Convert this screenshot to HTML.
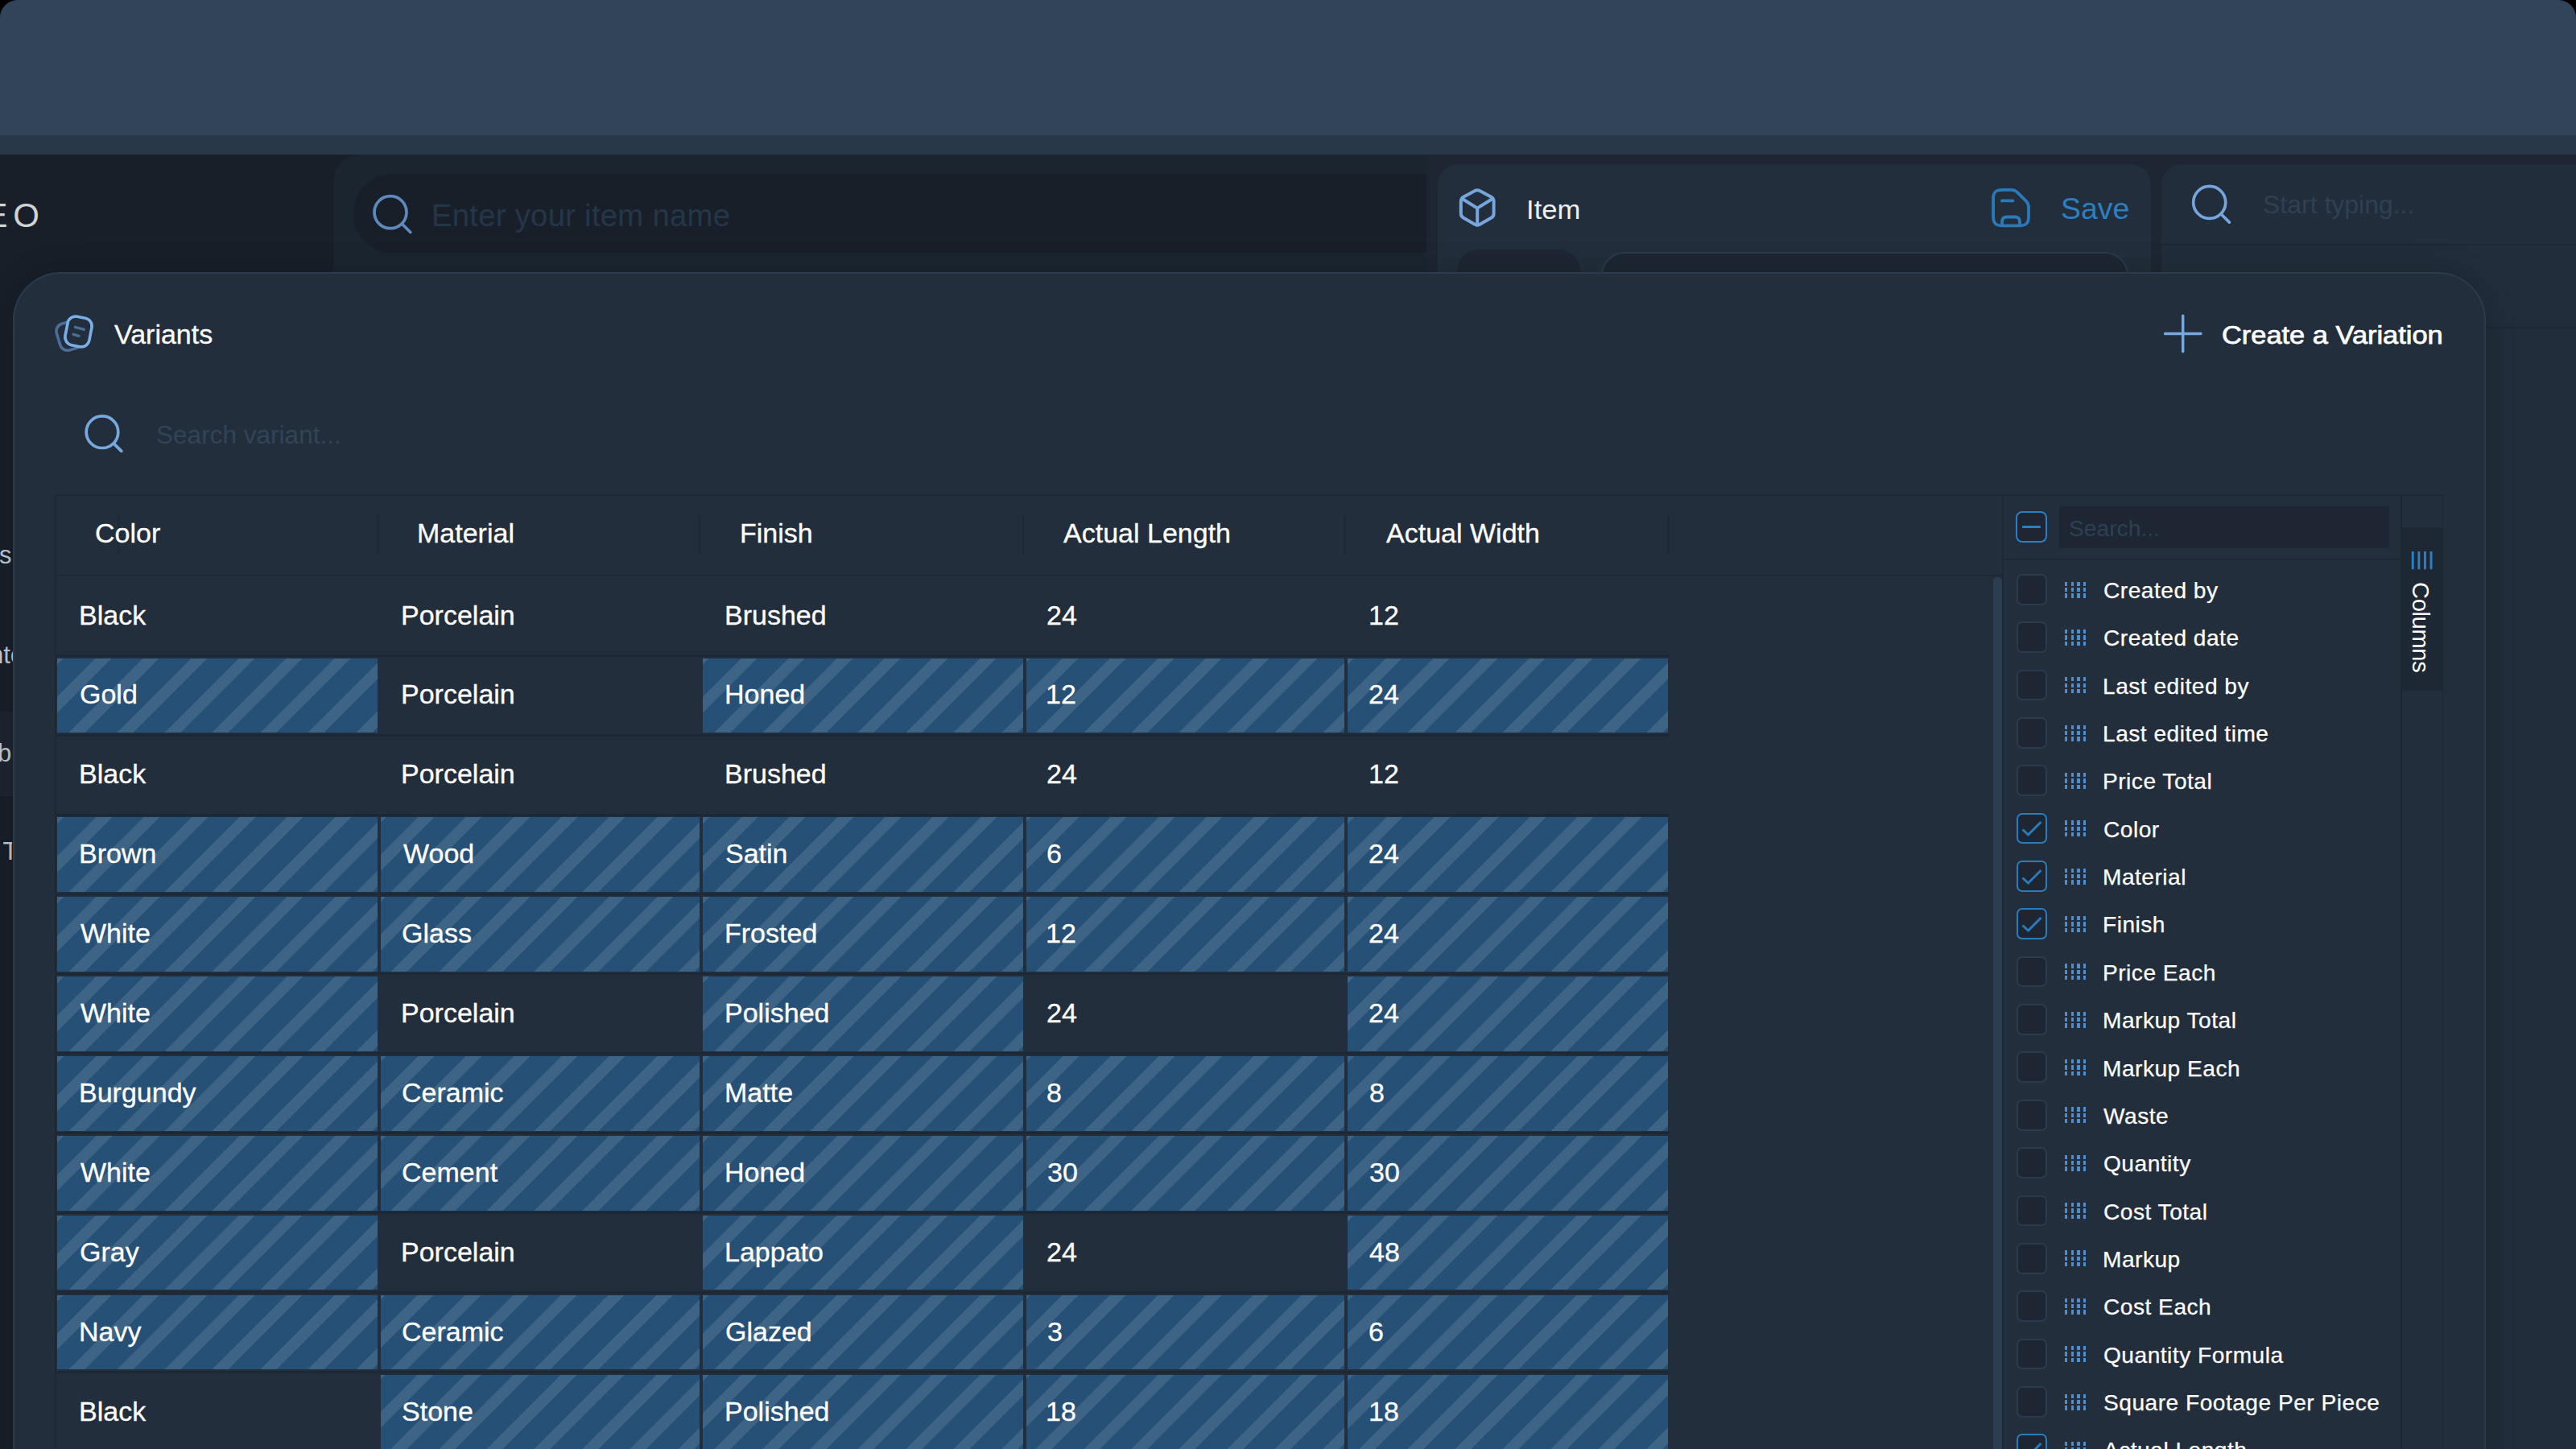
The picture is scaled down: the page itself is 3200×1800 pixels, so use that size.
<!DOCTYPE html><html><head><meta charset="utf-8"><title>Variants</title>
<style>
*{box-sizing:border-box;margin:0;padding:0}
html,body{width:3200px;height:1800px;background:#000;overflow:hidden}
body{font-family:"Liberation Sans",sans-serif;position:relative}
#scr{position:absolute;left:0;top:0;width:3200px;height:1800px;background:#181f29;border-radius:22px 22px 0 0;overflow:hidden}
.a{position:absolute}
.t{position:absolute;line-height:1;white-space:nowrap;transform-origin:0 50%}
svg{position:absolute;overflow:visible}
.hl{background:repeating-linear-gradient(-45deg,#265075 0,#265075 4.9px,#3d6385 4.9px,#3d6385 19px,#265075 19px,#265075 42px)}
.cell{position:absolute;height:92.7px}
.cb{position:absolute;width:38.6px;height:38.8px;border:2px solid #2b3a4c;border-radius:7px;background:#1d2632}
.cb.on{border:2.5px solid #2a7cbd}
.dots{position:absolute;width:27px;height:20px}
</style></head><body><div id="scr">
<div class="a" style="left:0;top:0;width:3200px;height:168px;background:#324459"></div>
<div class="a" style="left:0;top:168px;width:3200px;height:24px;background:#283848"></div>
<div class="a" style="left:0;top:192px;width:414px;height:1608px;background:#181f29"></div>
<div class="a" style="left:0;top:884px;width:414px;height:105px;background:#1d2531"></div>
<div class="t " style="left:-18.6px;top:247.0px;font-size:42px;color:#d2d2d2;">E</div>
<div class="t " style="left:16.2px;top:247.0px;font-size:42px;color:#d2d2d2;">O</div>
<div class="t " style="left:-1.0px;top:674.1px;font-size:31px;color:#c3cad3;">s</div>
<div class="t " style="left:-13.0px;top:797.8px;font-size:31px;color:#c3cad3;">nte</div>
<div class="t " style="left:-3.0px;top:920.1px;font-size:31px;color:#c3cad3;">b</div>
<div class="t " style="left:3.5px;top:1042.4px;font-size:31px;color:#c3cad3;width:11.5px;overflow:hidden">T</div>
<div class="a" style="left:414px;top:192px;width:1358px;height:1608px;background:#1b2530;border-top-left-radius:34px"></div>
<div class="a" style="left:438.5px;top:215.6px;width:1333.5px;height:98.7px;background:#181f29;border-radius:50px 0 0 50px"></div>
<svg style="left:0;top:0" width="3200" height="400"><g fill="none" stroke="#5d8abd" stroke-width="3.7" stroke-linecap="round"><circle cx="485" cy="263.7" r="20"/><path d="M499.3 278 L509.8 288.5"/></g></svg>
<div class="t " style="left:536.4px;top:248.6px;font-size:38px;color:#263649;transform:scaleX(1.008);letter-spacing:0.25px">Enter your item name</div>
<div class="a" style="left:1772px;top:192px;width:1428px;height:1608px;background:#1d2632"></div>
<div class="a" style="left:1786px;top:204px;width:886px;height:200px;background:#232e3c;border-radius:26px 26px 0 0"></div>
<div class="a" style="left:1810px;top:310px;width:153px;height:80px;background:#1d2632;border-radius:27px"></div>
<div class="a" style="left:1989px;top:313px;width:655px;height:80px;background:#1d2632;border:2px solid #2b3a4c;border-radius:29px"></div>
<svg style="left:0;top:0" width="3200" height="400"><g fill="none" stroke="#76a6db" stroke-width="4" stroke-linejoin="round" stroke-linecap="round">
<path d="M1831.7 237.2 Q1835.2 235.2 1838.7 237.2 L1852.6 244.7 Q1855.6 246.4 1855.6 250.2 L1855.6 265.2 Q1855.6 268.9 1852.6 270.6 L1838.7 278.5 Q1835.2 280.5 1831.7 278.5 L1817.8 270.6 Q1814.8 268.9 1814.8 265.2 L1814.8 250.2 Q1814.8 246.4 1817.8 244.7 Z"/>
<path d="M1816.2 246.8 L1835.2 258.6 L1854.2 246.8 M1835.2 258.6 L1835.2 279.8"/></g></svg>
<div class="t " style="left:1895.7px;top:243.7px;font-size:33px;color:#eef0f2;transform:scaleX(1.05);">Item</div>
<svg style="left:0;top:0" width="3200" height="400"><g fill="none" stroke="#2b7ab8" stroke-width="3.8" stroke-linejoin="round" stroke-linecap="round">
<path d="M2476.1 246.5 C2476.1 238.8 2479 235.8 2487 235.8 L2498.8 235.8 Q2502.6 235.8 2505.4 238.4 L2516.8 249.6 Q2520 252.8 2520 257.2 L2520 269 C2520 277.2 2517 280.3 2508.5 280.3 L2487.6 280.3 C2479 280.3 2476.1 277.2 2476.1 269 Z"/>
<path d="M2487 279.8 L2487 275.6 Q2487 269.5 2493.2 269.5 L2502.8 269.5 Q2509 269.5 2509 275.6 L2509 279.8"/>
<path d="M2487 249.4 L2500.4 249.4"/></g></svg>
<div class="t " style="left:2560.1px;top:242.0px;font-size:36px;color:#2e7fc0;transform:scaleX(1.04);">Save</div>
<div class="a" style="left:2685px;top:204px;width:515px;height:1596px;background:#222d3b;border-top-left-radius:26px"></div>
<div class="a" style="left:2685px;top:302.5px;width:515px;height:2px;background:#1d2632"></div>
<div class="a" style="left:3088px;top:405.6px;width:112px;height:2px;background:#1e2835"></div>
<svg style="left:0;top:0" width="3200" height="400"><g fill="none" stroke="#76a6db" stroke-width="3.7" stroke-linecap="round"><circle cx="2744.7" cy="251.4" r="20"/><path d="M2759 265.7 L2769.4 276.1"/></g></svg>
<div class="t " style="left:2810.5px;top:238.7px;font-size:31.5px;color:#2f4054;transform:scaleX(1.015);">Start typing...</div>
<div class="a" style="left:15.5px;top:337.5px;width:3072px;height:1600px;background:#232e3c;border:2px solid #2b3a4d;border-radius:60px;box-shadow:0 0 36px 0 rgba(10,14,20,0.22)"></div>
<svg style="left:0;top:0" width="400" height="500"><g fill="none" stroke-width="3.6" stroke-linecap="round" stroke-linejoin="round">
<g transform="translate(85.6,417.4) rotate(-17)"><rect x="-13.6" y="-17" width="27.2" height="34" rx="9.5" stroke="#4b6e96"/></g>
<g transform="translate(97.5,412) rotate(11)"><rect x="-15.2" y="-18" width="30.4" height="36" rx="10" stroke="#7aaee6" fill="#232e3c"/></g>
<path d="M93.4 406.3 L104.4 409.4 M91 415.3 L98 417.4" stroke="#4b6e96" stroke-width="3.3"/></g></svg>
<div class="t " style="left:141.5px;top:399.7px;font-size:32.4px;color:#fff;transform:scaleX(1.05);-webkit-text-stroke:0.3px #fff">Variants</div>
<svg style="left:0;top:0" width="3200" height="500"><path d="M2689.5 414.5 H2734 M2711.7 392.3 V436.8" stroke="#7aa8dd" stroke-width="3.4" stroke-linecap="round" fill="none"/></svg>
<div class="t " style="left:2760.4px;top:399.8px;font-size:32px;color:#fff;transform:scaleX(1.075);-webkit-text-stroke:0.75px #fff">Create a Variation</div>
<svg style="left:0;top:0" width="400" height="700"><g fill="none" stroke="#78a9de" stroke-width="3.7" stroke-linecap="round"><circle cx="127" cy="536.7" r="19.8"/><path d="M141.2 550.9 L150.8 560.4"/></g></svg>
<div class="t " style="left:193.5px;top:524.5px;font-size:31px;color:#324457;transform:scaleX(1.018);">Search variant...</div>
<div class="a" style="left:67.5px;top:613.5px;width:2967px;height:2px;background:#1e2835"></div>
<div class="a" style="left:67.5px;top:613.5px;width:2px;height:1200px;background:#1e2835"></div>
<div class="a" style="left:67.5px;top:714.4px;width:2420px;height:2px;background:#1e2835"></div>
<div class="a" style="left:468.2px;top:638.5px;width:2.6px;height:50.3px;background:#1f2936"></div>
<div class="a" style="left:867.9px;top:638.5px;width:2.6px;height:50.3px;background:#1f2936"></div>
<div class="a" style="left:1269.6px;top:638.5px;width:2.6px;height:50.3px;background:#1f2936"></div>
<div class="a" style="left:1669.4px;top:638.5px;width:2.6px;height:50.3px;background:#1f2936"></div>
<div class="a" style="left:2071.3px;top:638.5px;width:2.6px;height:50.3px;background:#1f2936"></div>
<div class="a" style="left:146.4px;top:638.5px;width:2px;height:50px;background:#1f2936"></div>
<div class="t " style="left:117.8px;top:646.8px;font-size:32.4px;color:#fff;transform:scaleX(1.05);-webkit-text-stroke:0.3px #fff">Color</div>
<div class="t " style="left:517.6px;top:646.8px;font-size:32.4px;color:#fff;transform:scaleX(1.05);-webkit-text-stroke:0.3px #fff">Material</div>
<div class="t " style="left:919.4px;top:646.8px;font-size:32.4px;color:#fff;transform:scaleX(1.05);-webkit-text-stroke:0.3px #fff">Finish</div>
<div class="t " style="left:1321.4px;top:646.8px;font-size:32.4px;color:#fff;transform:scaleX(1.05);-webkit-text-stroke:0.3px #fff">Actual Length</div>
<div class="t " style="left:1721.9px;top:646.8px;font-size:32.4px;color:#fff;transform:scaleX(1.05);-webkit-text-stroke:0.3px #fff">Actual Width</div>
<div class="a" style="left:69.5px;top:812.9px;width:2004.6px;height:2.9px;background:#1e2835"></div>
<div class="t " style="left:97.7px;top:748.5px;font-size:32.4px;color:#fff;transform:scaleX(1.05);-webkit-text-stroke:0.3px #fff">Black</div>
<div class="t " style="left:497.9px;top:748.5px;font-size:32.4px;color:#fff;transform:scaleX(1.05);-webkit-text-stroke:0.3px #fff">Porcelain</div>
<div class="t " style="left:899.6px;top:748.5px;font-size:32.4px;color:#fff;transform:scaleX(1.05);-webkit-text-stroke:0.3px #fff">Brushed</div>
<div class="t " style="left:1300.1px;top:748.5px;font-size:32.4px;color:#fff;transform:scaleX(1.05);-webkit-text-stroke:0.3px #fff">24</div>
<div class="t " style="left:1699.5px;top:748.5px;font-size:32.4px;color:#fff;transform:scaleX(1.05);-webkit-text-stroke:0.3px #fff">12</div>
<div class="a" style="left:69.5px;top:911.8px;width:2004.6px;height:2.9px;background:#1e2835"></div>
<div class="cell hl" style="left:71.4px;top:817.5px;width:397.9px"></div>
<div class="t " style="left:98.8px;top:847.4px;font-size:32.4px;color:#fff;transform:scaleX(1.05);-webkit-text-stroke:0.3px #fff">Gold</div>
<div class="t " style="left:497.9px;top:847.4px;font-size:32.4px;color:#fff;transform:scaleX(1.05);-webkit-text-stroke:0.3px #fff">Porcelain</div>
<div class="cell hl" style="left:872.9px;top:817.5px;width:397.8px"></div>
<div class="t " style="left:899.6px;top:847.4px;font-size:32.4px;color:#fff;transform:scaleX(1.05);-webkit-text-stroke:0.3px #fff">Honed</div>
<div class="cell hl" style="left:1274.5px;top:817.5px;width:395.9px"></div>
<div class="t " style="left:1299.2px;top:847.4px;font-size:32.4px;color:#fff;transform:scaleX(1.05);-webkit-text-stroke:0.3px #fff">12</div>
<div class="cell hl" style="left:1674.4px;top:817.5px;width:398.0px"></div>
<div class="t " style="left:1700.4px;top:847.4px;font-size:32.4px;color:#fff;transform:scaleX(1.05);-webkit-text-stroke:0.3px #fff">24</div>
<div class="a" style="left:69.5px;top:1010.7px;width:2004.6px;height:2.9px;background:#1e2835"></div>
<div class="t " style="left:97.7px;top:946.3px;font-size:32.4px;color:#fff;transform:scaleX(1.05);-webkit-text-stroke:0.3px #fff">Black</div>
<div class="t " style="left:497.9px;top:946.3px;font-size:32.4px;color:#fff;transform:scaleX(1.05);-webkit-text-stroke:0.3px #fff">Porcelain</div>
<div class="t " style="left:899.6px;top:946.3px;font-size:32.4px;color:#fff;transform:scaleX(1.05);-webkit-text-stroke:0.3px #fff">Brushed</div>
<div class="t " style="left:1300.1px;top:946.3px;font-size:32.4px;color:#fff;transform:scaleX(1.05);-webkit-text-stroke:0.3px #fff">24</div>
<div class="t " style="left:1699.5px;top:946.3px;font-size:32.4px;color:#fff;transform:scaleX(1.05);-webkit-text-stroke:0.3px #fff">12</div>
<div class="a" style="left:69.5px;top:1109.6px;width:2004.6px;height:2.9px;background:#1e2835"></div>
<div class="cell hl" style="left:71.4px;top:1015.3px;width:397.9px"></div>
<div class="t " style="left:97.7px;top:1045.2px;font-size:32.4px;color:#fff;transform:scaleX(1.05);-webkit-text-stroke:0.3px #fff">Brown</div>
<div class="cell hl" style="left:473.1px;top:1015.3px;width:395.8px"></div>
<div class="t " style="left:500.6px;top:1045.2px;font-size:32.4px;color:#fff;transform:scaleX(1.05);-webkit-text-stroke:0.3px #fff">Wood</div>
<div class="cell hl" style="left:872.9px;top:1015.3px;width:397.8px"></div>
<div class="t " style="left:900.9px;top:1045.2px;font-size:32.4px;color:#fff;transform:scaleX(1.05);-webkit-text-stroke:0.3px #fff">Satin</div>
<div class="cell hl" style="left:1274.5px;top:1015.3px;width:395.9px"></div>
<div class="t " style="left:1300.1px;top:1045.2px;font-size:32.4px;color:#fff;transform:scaleX(1.05);-webkit-text-stroke:0.3px #fff">6</div>
<div class="cell hl" style="left:1674.4px;top:1015.3px;width:398.0px"></div>
<div class="t " style="left:1700.4px;top:1045.2px;font-size:32.4px;color:#fff;transform:scaleX(1.05);-webkit-text-stroke:0.3px #fff">24</div>
<div class="a" style="left:69.5px;top:1208.5px;width:2004.6px;height:2.9px;background:#1e2835"></div>
<div class="cell hl" style="left:71.4px;top:1114.2px;width:397.9px"></div>
<div class="t " style="left:100.4px;top:1144.1px;font-size:32.4px;color:#fff;transform:scaleX(1.05);-webkit-text-stroke:0.3px #fff">White</div>
<div class="cell hl" style="left:473.1px;top:1114.2px;width:395.8px"></div>
<div class="t " style="left:499.0px;top:1144.1px;font-size:32.4px;color:#fff;transform:scaleX(1.05);-webkit-text-stroke:0.3px #fff">Glass</div>
<div class="cell hl" style="left:872.9px;top:1114.2px;width:397.8px"></div>
<div class="t " style="left:899.6px;top:1144.1px;font-size:32.4px;color:#fff;transform:scaleX(1.05);-webkit-text-stroke:0.3px #fff">Frosted</div>
<div class="cell hl" style="left:1274.5px;top:1114.2px;width:395.9px"></div>
<div class="t " style="left:1299.2px;top:1144.1px;font-size:32.4px;color:#fff;transform:scaleX(1.05);-webkit-text-stroke:0.3px #fff">12</div>
<div class="cell hl" style="left:1674.4px;top:1114.2px;width:398.0px"></div>
<div class="t " style="left:1700.4px;top:1144.1px;font-size:32.4px;color:#fff;transform:scaleX(1.05);-webkit-text-stroke:0.3px #fff">24</div>
<div class="a" style="left:69.5px;top:1307.4px;width:2004.6px;height:2.9px;background:#1e2835"></div>
<div class="cell hl" style="left:71.4px;top:1213.1px;width:397.9px"></div>
<div class="t " style="left:100.4px;top:1243.0px;font-size:32.4px;color:#fff;transform:scaleX(1.05);-webkit-text-stroke:0.3px #fff">White</div>
<div class="t " style="left:497.9px;top:1243.0px;font-size:32.4px;color:#fff;transform:scaleX(1.05);-webkit-text-stroke:0.3px #fff">Porcelain</div>
<div class="cell hl" style="left:872.9px;top:1213.1px;width:397.8px"></div>
<div class="t " style="left:899.6px;top:1243.0px;font-size:32.4px;color:#fff;transform:scaleX(1.05);-webkit-text-stroke:0.3px #fff">Polished</div>
<div class="t " style="left:1300.1px;top:1243.0px;font-size:32.4px;color:#fff;transform:scaleX(1.05);-webkit-text-stroke:0.3px #fff">24</div>
<div class="cell hl" style="left:1674.4px;top:1213.1px;width:398.0px"></div>
<div class="t " style="left:1700.4px;top:1243.0px;font-size:32.4px;color:#fff;transform:scaleX(1.05);-webkit-text-stroke:0.3px #fff">24</div>
<div class="a" style="left:69.5px;top:1406.3px;width:2004.6px;height:2.9px;background:#1e2835"></div>
<div class="cell hl" style="left:71.4px;top:1312.0px;width:397.9px"></div>
<div class="t " style="left:97.7px;top:1341.9px;font-size:32.4px;color:#fff;transform:scaleX(1.05);-webkit-text-stroke:0.3px #fff">Burgundy</div>
<div class="cell hl" style="left:473.1px;top:1312.0px;width:395.8px"></div>
<div class="t " style="left:499.0px;top:1341.9px;font-size:32.4px;color:#fff;transform:scaleX(1.05);-webkit-text-stroke:0.3px #fff">Ceramic</div>
<div class="cell hl" style="left:872.9px;top:1312.0px;width:397.8px"></div>
<div class="t " style="left:899.6px;top:1341.9px;font-size:32.4px;color:#fff;transform:scaleX(1.05);-webkit-text-stroke:0.3px #fff">Matte</div>
<div class="cell hl" style="left:1274.5px;top:1312.0px;width:395.9px"></div>
<div class="t " style="left:1300.3px;top:1341.9px;font-size:32.4px;color:#fff;transform:scaleX(1.05);-webkit-text-stroke:0.3px #fff">8</div>
<div class="cell hl" style="left:1674.4px;top:1312.0px;width:398.0px"></div>
<div class="t " style="left:1700.6px;top:1341.9px;font-size:32.4px;color:#fff;transform:scaleX(1.05);-webkit-text-stroke:0.3px #fff">8</div>
<div class="a" style="left:69.5px;top:1505.2px;width:2004.6px;height:2.9px;background:#1e2835"></div>
<div class="cell hl" style="left:71.4px;top:1410.9px;width:397.9px"></div>
<div class="t " style="left:100.4px;top:1440.8px;font-size:32.4px;color:#fff;transform:scaleX(1.05);-webkit-text-stroke:0.3px #fff">White</div>
<div class="cell hl" style="left:473.1px;top:1410.9px;width:395.8px"></div>
<div class="t " style="left:499.0px;top:1440.8px;font-size:32.4px;color:#fff;transform:scaleX(1.05);-webkit-text-stroke:0.3px #fff">Cement</div>
<div class="cell hl" style="left:872.9px;top:1410.9px;width:397.8px"></div>
<div class="t " style="left:899.6px;top:1440.8px;font-size:32.4px;color:#fff;transform:scaleX(1.05);-webkit-text-stroke:0.3px #fff">Honed</div>
<div class="cell hl" style="left:1274.5px;top:1410.9px;width:395.9px"></div>
<div class="t " style="left:1300.5px;top:1440.8px;font-size:32.4px;color:#fff;transform:scaleX(1.05);-webkit-text-stroke:0.3px #fff">30</div>
<div class="cell hl" style="left:1674.4px;top:1410.9px;width:398.0px"></div>
<div class="t " style="left:1700.8px;top:1440.8px;font-size:32.4px;color:#fff;transform:scaleX(1.05);-webkit-text-stroke:0.3px #fff">30</div>
<div class="a" style="left:69.5px;top:1604.1px;width:2004.6px;height:2.9px;background:#1e2835"></div>
<div class="cell hl" style="left:71.4px;top:1509.8px;width:397.9px"></div>
<div class="t " style="left:98.8px;top:1539.7px;font-size:32.4px;color:#fff;transform:scaleX(1.05);-webkit-text-stroke:0.3px #fff">Gray</div>
<div class="t " style="left:497.9px;top:1539.7px;font-size:32.4px;color:#fff;transform:scaleX(1.05);-webkit-text-stroke:0.3px #fff">Porcelain</div>
<div class="cell hl" style="left:872.9px;top:1509.8px;width:397.8px"></div>
<div class="t " style="left:899.6px;top:1539.7px;font-size:32.4px;color:#fff;transform:scaleX(1.05);-webkit-text-stroke:0.3px #fff">Lappato</div>
<div class="t " style="left:1300.1px;top:1539.7px;font-size:32.4px;color:#fff;transform:scaleX(1.05);-webkit-text-stroke:0.3px #fff">24</div>
<div class="cell hl" style="left:1674.4px;top:1509.8px;width:398.0px"></div>
<div class="t " style="left:1701.3px;top:1539.7px;font-size:32.4px;color:#fff;transform:scaleX(1.05);-webkit-text-stroke:0.3px #fff">48</div>
<div class="a" style="left:69.5px;top:1703.0px;width:2004.6px;height:2.9px;background:#1e2835"></div>
<div class="cell hl" style="left:71.4px;top:1608.7px;width:397.9px"></div>
<div class="t " style="left:97.7px;top:1638.6px;font-size:32.4px;color:#fff;transform:scaleX(1.05);-webkit-text-stroke:0.3px #fff">Navy</div>
<div class="cell hl" style="left:473.1px;top:1608.7px;width:395.8px"></div>
<div class="t " style="left:499.0px;top:1638.6px;font-size:32.4px;color:#fff;transform:scaleX(1.05);-webkit-text-stroke:0.3px #fff">Ceramic</div>
<div class="cell hl" style="left:872.9px;top:1608.7px;width:397.8px"></div>
<div class="t " style="left:900.7px;top:1638.6px;font-size:32.4px;color:#fff;transform:scaleX(1.05);-webkit-text-stroke:0.3px #fff">Glazed</div>
<div class="cell hl" style="left:1274.5px;top:1608.7px;width:395.9px"></div>
<div class="t " style="left:1300.5px;top:1638.6px;font-size:32.4px;color:#fff;transform:scaleX(1.05);-webkit-text-stroke:0.3px #fff">3</div>
<div class="cell hl" style="left:1674.4px;top:1608.7px;width:398.0px"></div>
<div class="t " style="left:1700.4px;top:1638.6px;font-size:32.4px;color:#fff;transform:scaleX(1.05);-webkit-text-stroke:0.3px #fff">6</div>
<div class="a" style="left:69.5px;top:1801.9px;width:2004.6px;height:2.9px;background:#1e2835"></div>
<div class="t " style="left:97.7px;top:1737.5px;font-size:32.4px;color:#fff;transform:scaleX(1.05);-webkit-text-stroke:0.3px #fff">Black</div>
<div class="cell hl" style="left:473.1px;top:1707.6px;width:395.8px"></div>
<div class="t " style="left:499.2px;top:1737.5px;font-size:32.4px;color:#fff;transform:scaleX(1.05);-webkit-text-stroke:0.3px #fff">Stone</div>
<div class="cell hl" style="left:872.9px;top:1707.6px;width:397.8px"></div>
<div class="t " style="left:899.6px;top:1737.5px;font-size:32.4px;color:#fff;transform:scaleX(1.05);-webkit-text-stroke:0.3px #fff">Polished</div>
<div class="cell hl" style="left:1274.5px;top:1707.6px;width:395.9px"></div>
<div class="t " style="left:1299.2px;top:1737.5px;font-size:32.4px;color:#fff;transform:scaleX(1.05);-webkit-text-stroke:0.3px #fff">18</div>
<div class="cell hl" style="left:1674.4px;top:1707.6px;width:398.0px"></div>
<div class="t " style="left:1699.5px;top:1737.5px;font-size:32.4px;color:#fff;transform:scaleX(1.05);-webkit-text-stroke:0.3px #fff">18</div>
<div class="a" style="left:2475.5px;top:717px;width:11.3px;height:1200px;background:#2c3e52;border-radius:6px"></div>
<div class="a" style="left:2487px;top:615px;width:2px;height:1200px;background:#1e2835"></div>
<div class="a" style="left:2981.5px;top:615px;width:2px;height:1200px;background:#1e2835"></div>
<div class="a" style="left:3033.5px;top:615px;width:1.5px;height:1200px;background:#1f2936"></div>
<div class="a" style="left:2489px;top:694px;width:493px;height:2px;background:#1e2835"></div>
<div class="a" style="left:2983.5px;top:655px;width:50px;height:203px;background:#1e2734"></div>
<svg style="left:0;top:0" width="3200" height="800"><g fill="#2e7fc4"><rect x="2995.8" y="685" width="2.9" height="22.2"/><rect x="3003.4" y="685" width="2.9" height="22.2"/><rect x="3011" y="685" width="2.9" height="22.2"/><rect x="3018.6" y="685" width="2.9" height="22.2"/></g></svg>
<div class="t" style="left:2992px;top:722.5px;font-size:29px;color:#fff;writing-mode:vertical-rl;letter-spacing:-0.3px;line-height:30px;width:30px">Columns</div>
<div class="a" style="left:2503.7px;top:634.9px;width:39.5px;height:39.5px;border:2.6px solid #2a7fc2;border-radius:8px;background:#1d2632"></div>
<div class="a" style="left:2512px;top:652.6px;width:23.4px;height:3.4px;background:#2a7fc2;border-radius:1px"></div>
<div class="a" style="left:2558px;top:629px;width:410px;height:51.6px;background:#1d2632"></div>
<div class="t " style="left:2570.3px;top:643.8px;font-size:27px;color:#2f4054;transform:scaleX(1.045);">Search...</div>
<div class="cb" style="left:2504.8px;top:712.9px"></div>
<div class="dots" style="left:2565px;top:722.5px;background:repeating-linear-gradient(0deg,transparent 0,transparent 2.2px,#232e3c 2.2px,#232e3c 0),repeating-linear-gradient(90deg,#4f8dcd 0,#4f8dcd 3.4px,transparent 3.5px,transparent 7.65px)"></div>
<div class="a" style="left:2564px;top:727.7px;width:29px;height:2.2px;background:#232e3c"></div>
<div class="a" style="left:2564px;top:735.1px;width:29px;height:2.2px;background:#232e3c"></div>
<div class="t " style="left:2612.5px;top:720.0px;font-size:28px;color:#fff;transform:scaleX(1.004);letter-spacing:0.5px;-webkit-text-stroke:0.25px #fff">Created by</div>
<div class="cb" style="left:2504.8px;top:772.2px"></div>
<div class="dots" style="left:2565px;top:781.9px;background:repeating-linear-gradient(0deg,transparent 0,transparent 2.2px,#232e3c 2.2px,#232e3c 0),repeating-linear-gradient(90deg,#4f8dcd 0,#4f8dcd 3.4px,transparent 3.5px,transparent 7.65px)"></div>
<div class="a" style="left:2564px;top:787.1px;width:29px;height:2.2px;background:#232e3c"></div>
<div class="a" style="left:2564px;top:794.5px;width:29px;height:2.2px;background:#232e3c"></div>
<div class="t " style="left:2612.5px;top:779.3px;font-size:28px;color:#fff;transform:scaleX(1.004);letter-spacing:0.5px;-webkit-text-stroke:0.25px #fff">Created date</div>
<div class="cb" style="left:2504.8px;top:831.6px"></div>
<div class="dots" style="left:2565px;top:841.2px;background:repeating-linear-gradient(0deg,transparent 0,transparent 2.2px,#232e3c 2.2px,#232e3c 0),repeating-linear-gradient(90deg,#4f8dcd 0,#4f8dcd 3.4px,transparent 3.5px,transparent 7.65px)"></div>
<div class="a" style="left:2564px;top:846.4px;width:29px;height:2.2px;background:#232e3c"></div>
<div class="a" style="left:2564px;top:853.8px;width:29px;height:2.2px;background:#232e3c"></div>
<div class="t " style="left:2611.6px;top:838.7px;font-size:28px;color:#fff;transform:scaleX(1.004);letter-spacing:0.5px;-webkit-text-stroke:0.25px #fff">Last edited by</div>
<div class="cb" style="left:2504.8px;top:890.9px"></div>
<div class="dots" style="left:2565px;top:900.5px;background:repeating-linear-gradient(0deg,transparent 0,transparent 2.2px,#232e3c 2.2px,#232e3c 0),repeating-linear-gradient(90deg,#4f8dcd 0,#4f8dcd 3.4px,transparent 3.5px,transparent 7.65px)"></div>
<div class="a" style="left:2564px;top:905.8px;width:29px;height:2.2px;background:#232e3c"></div>
<div class="a" style="left:2564px;top:913.1px;width:29px;height:2.2px;background:#232e3c"></div>
<div class="t " style="left:2611.6px;top:898.0px;font-size:28px;color:#fff;transform:scaleX(1.004);letter-spacing:0.5px;-webkit-text-stroke:0.25px #fff">Last edited time</div>
<div class="cb" style="left:2504.8px;top:950.3px"></div>
<div class="dots" style="left:2565px;top:959.9px;background:repeating-linear-gradient(0deg,transparent 0,transparent 2.2px,#232e3c 2.2px,#232e3c 0),repeating-linear-gradient(90deg,#4f8dcd 0,#4f8dcd 3.4px,transparent 3.5px,transparent 7.65px)"></div>
<div class="a" style="left:2564px;top:965.1px;width:29px;height:2.2px;background:#232e3c"></div>
<div class="a" style="left:2564px;top:972.5px;width:29px;height:2.2px;background:#232e3c"></div>
<div class="t " style="left:2611.6px;top:957.4px;font-size:28px;color:#fff;transform:scaleX(1.004);letter-spacing:0.5px;-webkit-text-stroke:0.25px #fff">Price Total</div>
<div class="cb on" style="left:2504.8px;top:1009.6px"></div>
<svg style="left:2505px;top:1010.2px" width="38" height="38"><path d="M7.5 20.5 L14.5 27 L30.5 11" fill="none" stroke="#2a7cbd" stroke-width="3"/></svg>
<div class="dots" style="left:2565px;top:1019.2px;background:repeating-linear-gradient(0deg,transparent 0,transparent 2.2px,#232e3c 2.2px,#232e3c 0),repeating-linear-gradient(90deg,#4f8dcd 0,#4f8dcd 3.4px,transparent 3.5px,transparent 7.65px)"></div>
<div class="a" style="left:2564px;top:1024.5px;width:29px;height:2.2px;background:#232e3c"></div>
<div class="a" style="left:2564px;top:1031.8px;width:29px;height:2.2px;background:#232e3c"></div>
<div class="t " style="left:2612.5px;top:1016.7px;font-size:28px;color:#fff;transform:scaleX(1.004);letter-spacing:0.5px;-webkit-text-stroke:0.25px #fff">Color</div>
<div class="cb on" style="left:2504.8px;top:1069.0px"></div>
<svg style="left:2505px;top:1069.6px" width="38" height="38"><path d="M7.5 20.5 L14.5 27 L30.5 11" fill="none" stroke="#2a7cbd" stroke-width="3"/></svg>
<div class="dots" style="left:2565px;top:1078.6px;background:repeating-linear-gradient(0deg,transparent 0,transparent 2.2px,#232e3c 2.2px,#232e3c 0),repeating-linear-gradient(90deg,#4f8dcd 0,#4f8dcd 3.4px,transparent 3.5px,transparent 7.65px)"></div>
<div class="a" style="left:2564px;top:1083.8px;width:29px;height:2.2px;background:#232e3c"></div>
<div class="a" style="left:2564px;top:1091.2px;width:29px;height:2.2px;background:#232e3c"></div>
<div class="t " style="left:2611.6px;top:1076.1px;font-size:28px;color:#fff;transform:scaleX(1.004);letter-spacing:0.5px;-webkit-text-stroke:0.25px #fff">Material</div>
<div class="cb on" style="left:2504.8px;top:1128.4px"></div>
<svg style="left:2505px;top:1129.0px" width="38" height="38"><path d="M7.5 20.5 L14.5 27 L30.5 11" fill="none" stroke="#2a7cbd" stroke-width="3"/></svg>
<div class="dots" style="left:2565px;top:1138.0px;background:repeating-linear-gradient(0deg,transparent 0,transparent 2.2px,#232e3c 2.2px,#232e3c 0),repeating-linear-gradient(90deg,#4f8dcd 0,#4f8dcd 3.4px,transparent 3.5px,transparent 7.65px)"></div>
<div class="a" style="left:2564px;top:1143.2px;width:29px;height:2.2px;background:#232e3c"></div>
<div class="a" style="left:2564px;top:1150.5px;width:29px;height:2.2px;background:#232e3c"></div>
<div class="t " style="left:2611.6px;top:1135.4px;font-size:28px;color:#fff;transform:scaleX(1.004);letter-spacing:0.5px;-webkit-text-stroke:0.25px #fff">Finish</div>
<div class="cb" style="left:2504.8px;top:1187.7px"></div>
<div class="dots" style="left:2565px;top:1197.3px;background:repeating-linear-gradient(0deg,transparent 0,transparent 2.2px,#232e3c 2.2px,#232e3c 0),repeating-linear-gradient(90deg,#4f8dcd 0,#4f8dcd 3.4px,transparent 3.5px,transparent 7.65px)"></div>
<div class="a" style="left:2564px;top:1202.5px;width:29px;height:2.2px;background:#232e3c"></div>
<div class="a" style="left:2564px;top:1209.9px;width:29px;height:2.2px;background:#232e3c"></div>
<div class="t " style="left:2611.6px;top:1194.8px;font-size:28px;color:#fff;transform:scaleX(1.004);letter-spacing:0.5px;-webkit-text-stroke:0.25px #fff">Price Each</div>
<div class="cb" style="left:2504.8px;top:1247.1px"></div>
<div class="dots" style="left:2565px;top:1256.7px;background:repeating-linear-gradient(0deg,transparent 0,transparent 2.2px,#232e3c 2.2px,#232e3c 0),repeating-linear-gradient(90deg,#4f8dcd 0,#4f8dcd 3.4px,transparent 3.5px,transparent 7.65px)"></div>
<div class="a" style="left:2564px;top:1261.9px;width:29px;height:2.2px;background:#232e3c"></div>
<div class="a" style="left:2564px;top:1269.2px;width:29px;height:2.2px;background:#232e3c"></div>
<div class="t " style="left:2611.6px;top:1254.1px;font-size:28px;color:#fff;transform:scaleX(1.004);letter-spacing:0.5px;-webkit-text-stroke:0.25px #fff">Markup Total</div>
<div class="cb" style="left:2504.8px;top:1306.4px"></div>
<div class="dots" style="left:2565px;top:1316.0px;background:repeating-linear-gradient(0deg,transparent 0,transparent 2.2px,#232e3c 2.2px,#232e3c 0),repeating-linear-gradient(90deg,#4f8dcd 0,#4f8dcd 3.4px,transparent 3.5px,transparent 7.65px)"></div>
<div class="a" style="left:2564px;top:1321.2px;width:29px;height:2.2px;background:#232e3c"></div>
<div class="a" style="left:2564px;top:1328.6px;width:29px;height:2.2px;background:#232e3c"></div>
<div class="t " style="left:2611.6px;top:1313.5px;font-size:28px;color:#fff;transform:scaleX(1.004);letter-spacing:0.5px;-webkit-text-stroke:0.25px #fff">Markup Each</div>
<div class="cb" style="left:2504.8px;top:1365.8px"></div>
<div class="dots" style="left:2565px;top:1375.3px;background:repeating-linear-gradient(0deg,transparent 0,transparent 2.2px,#232e3c 2.2px,#232e3c 0),repeating-linear-gradient(90deg,#4f8dcd 0,#4f8dcd 3.4px,transparent 3.5px,transparent 7.65px)"></div>
<div class="a" style="left:2564px;top:1380.5px;width:29px;height:2.2px;background:#232e3c"></div>
<div class="a" style="left:2564px;top:1387.9px;width:29px;height:2.2px;background:#232e3c"></div>
<div class="t " style="left:2612.8px;top:1372.8px;font-size:28px;color:#fff;transform:scaleX(1.004);letter-spacing:0.5px;-webkit-text-stroke:0.25px #fff">Waste</div>
<div class="cb" style="left:2504.8px;top:1425.1px"></div>
<div class="dots" style="left:2565px;top:1434.7px;background:repeating-linear-gradient(0deg,transparent 0,transparent 2.2px,#232e3c 2.2px,#232e3c 0),repeating-linear-gradient(90deg,#4f8dcd 0,#4f8dcd 3.4px,transparent 3.5px,transparent 7.65px)"></div>
<div class="a" style="left:2564px;top:1439.9px;width:29px;height:2.2px;background:#232e3c"></div>
<div class="a" style="left:2564px;top:1447.3px;width:29px;height:2.2px;background:#232e3c"></div>
<div class="t " style="left:2612.6px;top:1432.2px;font-size:28px;color:#fff;transform:scaleX(1.004);letter-spacing:0.5px;-webkit-text-stroke:0.25px #fff">Quantity</div>
<div class="cb" style="left:2504.8px;top:1484.5px"></div>
<div class="dots" style="left:2565px;top:1494.1px;background:repeating-linear-gradient(0deg,transparent 0,transparent 2.2px,#232e3c 2.2px,#232e3c 0),repeating-linear-gradient(90deg,#4f8dcd 0,#4f8dcd 3.4px,transparent 3.5px,transparent 7.65px)"></div>
<div class="a" style="left:2564px;top:1499.3px;width:29px;height:2.2px;background:#232e3c"></div>
<div class="a" style="left:2564px;top:1506.7px;width:29px;height:2.2px;background:#232e3c"></div>
<div class="t " style="left:2612.5px;top:1491.5px;font-size:28px;color:#fff;transform:scaleX(1.004);letter-spacing:0.5px;-webkit-text-stroke:0.25px #fff">Cost Total</div>
<div class="cb" style="left:2504.8px;top:1543.8px"></div>
<div class="dots" style="left:2565px;top:1553.4px;background:repeating-linear-gradient(0deg,transparent 0,transparent 2.2px,#232e3c 2.2px,#232e3c 0),repeating-linear-gradient(90deg,#4f8dcd 0,#4f8dcd 3.4px,transparent 3.5px,transparent 7.65px)"></div>
<div class="a" style="left:2564px;top:1558.6px;width:29px;height:2.2px;background:#232e3c"></div>
<div class="a" style="left:2564px;top:1566.0px;width:29px;height:2.2px;background:#232e3c"></div>
<div class="t " style="left:2611.6px;top:1550.9px;font-size:28px;color:#fff;transform:scaleX(1.004);letter-spacing:0.5px;-webkit-text-stroke:0.25px #fff">Markup</div>
<div class="cb" style="left:2504.8px;top:1603.2px"></div>
<div class="dots" style="left:2565px;top:1612.8px;background:repeating-linear-gradient(0deg,transparent 0,transparent 2.2px,#232e3c 2.2px,#232e3c 0),repeating-linear-gradient(90deg,#4f8dcd 0,#4f8dcd 3.4px,transparent 3.5px,transparent 7.65px)"></div>
<div class="a" style="left:2564px;top:1618.0px;width:29px;height:2.2px;background:#232e3c"></div>
<div class="a" style="left:2564px;top:1625.3px;width:29px;height:2.2px;background:#232e3c"></div>
<div class="t " style="left:2612.5px;top:1610.2px;font-size:28px;color:#fff;transform:scaleX(1.004);letter-spacing:0.5px;-webkit-text-stroke:0.25px #fff">Cost Each</div>
<div class="cb" style="left:2504.8px;top:1662.5px"></div>
<div class="dots" style="left:2565px;top:1672.1px;background:repeating-linear-gradient(0deg,transparent 0,transparent 2.2px,#232e3c 2.2px,#232e3c 0),repeating-linear-gradient(90deg,#4f8dcd 0,#4f8dcd 3.4px,transparent 3.5px,transparent 7.65px)"></div>
<div class="a" style="left:2564px;top:1677.3px;width:29px;height:2.2px;background:#232e3c"></div>
<div class="a" style="left:2564px;top:1684.7px;width:29px;height:2.2px;background:#232e3c"></div>
<div class="t " style="left:2612.6px;top:1669.6px;font-size:28px;color:#fff;transform:scaleX(1.004);letter-spacing:0.5px;-webkit-text-stroke:0.25px #fff">Quantity Formula</div>
<div class="cb" style="left:2504.8px;top:1721.9px"></div>
<div class="dots" style="left:2565px;top:1731.5px;background:repeating-linear-gradient(0deg,transparent 0,transparent 2.2px,#232e3c 2.2px,#232e3c 0),repeating-linear-gradient(90deg,#4f8dcd 0,#4f8dcd 3.4px,transparent 3.5px,transparent 7.65px)"></div>
<div class="a" style="left:2564px;top:1736.7px;width:29px;height:2.2px;background:#232e3c"></div>
<div class="a" style="left:2564px;top:1744.0px;width:29px;height:2.2px;background:#232e3c"></div>
<div class="t " style="left:2612.6px;top:1728.9px;font-size:28px;color:#fff;transform:scaleX(1.004);letter-spacing:0.5px;-webkit-text-stroke:0.25px #fff">Square Footage Per Piece</div>
<div class="cb on" style="left:2504.8px;top:1781.2px"></div>
<svg style="left:2505px;top:1781.8px" width="38" height="38"><path d="M7.5 20.5 L14.5 27 L30.5 11" fill="none" stroke="#2a7cbd" stroke-width="3"/></svg>
<div class="dots" style="left:2565px;top:1790.8px;background:repeating-linear-gradient(0deg,transparent 0,transparent 2.2px,#232e3c 2.2px,#232e3c 0),repeating-linear-gradient(90deg,#4f8dcd 0,#4f8dcd 3.4px,transparent 3.5px,transparent 7.65px)"></div>
<div class="a" style="left:2564px;top:1796.0px;width:29px;height:2.2px;background:#232e3c"></div>
<div class="a" style="left:2564px;top:1803.4px;width:29px;height:2.2px;background:#232e3c"></div>
<div class="t " style="left:2612.8px;top:1788.3px;font-size:28px;color:#fff;transform:scaleX(1.004);letter-spacing:0.5px;-webkit-text-stroke:0.25px #fff">Actual Length</div>
</div></body></html>
